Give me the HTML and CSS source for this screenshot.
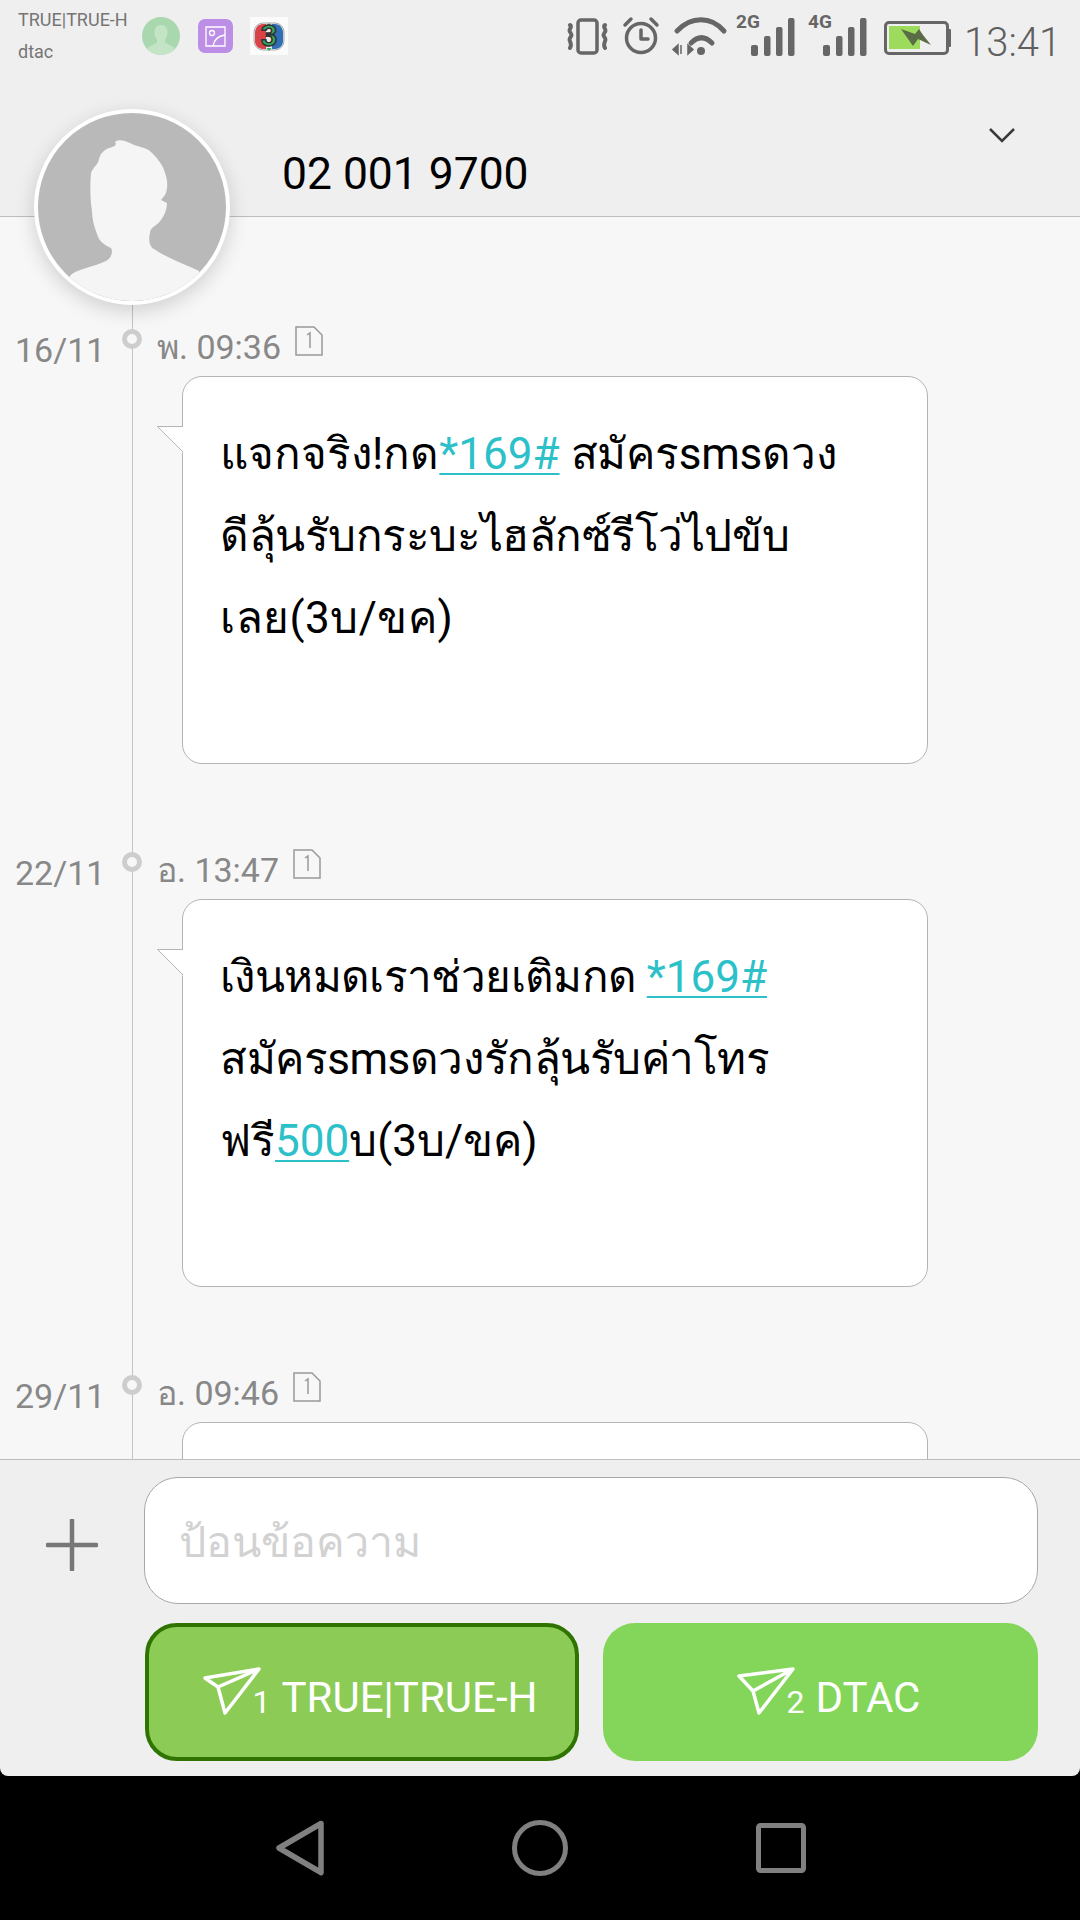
FILE: index.html
```html
<!DOCTYPE html>
<html lang="th">
<head>
<meta charset="utf-8">
<title>02 001 9700</title>
<link rel="stylesheet" href="styles.css">
</head>
<body>
<div class="phone">
  <div class="screen">
    <div class="status">
      <div class="carriers"><div>TRUE|TRUE-H</div><div>dtac</div></div>
      <svg class="apps" width="150" height="72" viewBox="142 0 150 72">
        <defs><clipPath id="gc"><circle cx="161" cy="36" r="19"/></clipPath></defs>
        <circle cx="161" cy="36" r="19" fill="#a9d8ae"/>
        <path clip-path="url(#gc)" d="M161 25c4 0 6.500 3 6.500 7 0 3-1 5.500-2.500 7.500v3l9 5v10h-26v-10l9-5v-3c-1.500-2-2.500-4.500-2.500-7.500 0-4 2.500-7 6.500-7z" fill="#c3e5c6"/>
        <rect x="198" y="19" width="35" height="34" rx="7" fill="#bd8ee6"/>
        <path d="M206 27h19v19h-19zM209.500 33a2.500 2.500 0 1 0 5 0a2.500 2.500 0 1 0-5 0M213 46c1-6 5-10 12-11" fill="none" stroke="#fff" stroke-width="1.300"/>
        <rect x="250" y="17" width="38" height="38" fill="#fbfbfb"/>
        <rect x="254" y="23" width="30" height="27" rx="9" fill="#ececec" stroke="#aaa"/>
        <path d="M263 24c-5 0-8 4-8 9v8c0 4 3 8 8 8h3V24z" fill="#d8434a"/>
        <path d="M275 24c5 0 8 4 8 9v8c0 4-3 8-8 8h-3V24z" fill="#2f6fb5"/>
        <path d="M269 23l2.500 3h-5z M269 51l2.500-3h-5z" fill="#35b06a"/>
        <text x="269" y="46" class="three">3</text>
      </svg>
      <svg class="sysicons" width="384" height="72" viewBox="567 0 384 72">
        <g fill="none" stroke="#666" stroke-width="3.500" stroke-linecap="round" stroke-linejoin="round">
          <rect x="578" y="20" width="19" height="33" rx="3"/>
          <path stroke-width="4" d="M570 25c3 2-2 4 0 7s2 3 0 6s3 5 0 10M605 25c-3 2 2 4 0 7s-2 3 0 6s-3 5 0 10"/>
          <circle cx="641" cy="38" r="14.500"/>
          <path d="M641 30v9h7M625 25l6-6M657 25l-6-6"/>
          <path d="M677 31c14-15 34-15 47 0M691 43c7-7 14-7 21 0" stroke-width="5"/>
        </g>
        <circle cx="701" cy="51" r="4" fill="#666"/>
        <path d="M678 45v9l-5-4.500zM681 45v9zM688 45l5 4.500l-5 4.500z" fill="#666" stroke="#666" stroke-width="1.500"/>
        <text x="736" y="28" class="net">2G</text>
        <text x="808" y="28" class="net">4G</text>
        <g fill="#666">
          <rect x="751" y="45" width="7" height="11" rx="2"/><rect x="764" y="36" width="6.500" height="20" rx="2"/><rect x="776" y="27" width="6.500" height="29" rx="2"/><rect x="788" y="18" width="6.500" height="38" rx="2"/>
          <rect x="823" y="45" width="7" height="11" rx="2"/><rect x="836" y="36" width="6.500" height="20" rx="2"/><rect x="848" y="27" width="6.500" height="29" rx="2"/><rect x="860" y="18" width="6.500" height="38" rx="2"/>
          <rect x="948" y="29" width="3" height="18" rx="1"/>
        </g>
        <rect x="885.500" y="22.500" width="62" height="31" rx="3.500" fill="none" stroke="#666" stroke-width="3"/>
        <rect x="889" y="26" width="31" height="23" fill="#9cdb5b"/>
        <path d="M901 29l14 5l4-5l4 6l8 10l-13-6l-5 7z" fill="#5b6b45"/>
      </svg>
      <div class="clock">13:41</div>
    </div>
    <header class="head">
      <div class="number">02 001 9700</div>
      <svg class="chevron" width="28" height="16" viewBox="0 0 28 16"><path d="M2 2l12 12L26 2" fill="none" stroke="#3a3a3a" stroke-width="2.500"/></svg>
    </header>
    <div class="avatar">
      <svg width="188" height="188" viewBox="4 4 188 188">
        <path fill="#f5f5f5" d="M81 33C84 30 90 31 96 34C103 38 112 38 117 43C124 50 129 56 131 64C134 72 134 80 131 86L127 91L133 94C133 102 129 108 127 111C123 117 116 118 116 124C114 132 116 138 120 140C133 149 150 155 165 162L170 200H30L36 167C42 160 60 158 72 152C78 149 79 142 77 139C70 136 65 132 63 125C60 117 58 110 58 102C56 90 56 75 57 64C59 58 64 56 65 50C66 45 70 41 75 39C78 38 84 37 81 33Z"/>
      </svg>
    </div>
    <main class="thread">
      <article class="msg">
        <div class="meta"><span class="date">16/11</span><span class="dot"></span><span class="time">พ. 09:36</span><svg class="sim" width="28" height="30" viewBox="0 0 28 30"><path d="M1 1h18l8 8v20H1z M12 9l3-2v15" fill="none" stroke="#999" stroke-width="1.500"/></svg></div>
        <div class="bubble">
          <svg class="tail" width="26" height="27" viewBox="0 0 26 27"><polygon points="0.500,0.500 26,0.500 26,27" fill="#fff"/><polyline points="26,0.500 0.500,0.500 26,26" fill="none" stroke="#b4b4b4"/></svg>
          แจกจริง!กด<a class="link">*169#</a> <span class="slim">สมัครsmsดวง</span><br><span class="tight">ดีลุ้นรับกระบะไฮลักซ์รีโว่ไปขับ</span><br><span class="wide">เลย(3บ/ขค)</span>
        </div>
      </article>
      <article class="msg">
        <div class="meta"><span class="date">22/11</span><span class="dot"></span><span class="time">อ. 13:47</span><svg class="sim" width="28" height="30" viewBox="0 0 28 30"><path d="M1 1h18l8 8v20H1z M12 9l3-2v15" fill="none" stroke="#999" stroke-width="1.500"/></svg></div>
        <div class="bubble">
          <svg class="tail" width="26" height="27" viewBox="0 0 26 27"><polygon points="0.500,0.500 26,0.500 26,27" fill="#fff"/><polyline points="26,0.500 0.500,0.500 26,26" fill="none" stroke="#b4b4b4"/></svg>
          <span class="tighter">เงินหมดเราช่วยเติมกด </span><a class="link">*169#</a><br><span class="tight">สมัครsmsดวงรักลุ้นรับค่าโทร</span><br>ฟรี<a class="link">500</a>บ(3บ/ขค)
        </div>
      </article>
      <article class="msg">
        <div class="meta"><span class="date">29/11</span><span class="dot"></span><span class="time">อ. 09:46</span><svg class="sim" width="28" height="30" viewBox="0 0 28 30"><path d="M1 1h18l8 8v20H1z M12 9l3-2v15" fill="none" stroke="#999" stroke-width="1.500"/></svg></div>
        <div class="bubble"></div>
      </article>
    </main>
    <footer class="composer">
      <div class="input-row">
        <svg class="plus" width="52" height="52" viewBox="0 0 52 52"><path d="M1.500 26h49M26 1.500v49" stroke="#777" stroke-width="4.500" stroke-linecap="round"/></svg>
        <div class="input">ป้อนข้อความ</div>
      </div>
      <div class="send-row">
        <button class="send send-active">
          <svg class="plane" width="58" height="48" viewBox="0 0 58 48"><path d="M2 11L56 2L22 46L15 20zM15 20L56 2" fill="none" stroke="#fff" stroke-width="3.500" stroke-linejoin="round"/></svg><span class="sim-no">1</span><span class="send-label">TRUE|TRUE-H</span>
        </button>
        <button class="send">
          <svg class="plane" width="58" height="48" viewBox="0 0 58 48"><path d="M2 9L56 2L22 46L16 24zM16 24L56 2" fill="none" stroke="#fff" stroke-width="3.500" stroke-linejoin="round"/></svg><span class="sim-no">2</span><span class="send-label">DTAC</span>
        </button>
      </div>
    </footer>
  </div>
  <nav class="nav">
    <svg width="48" height="56" viewBox="0 0 48 56"><path d="M45 3.500L3 28L45 52.500z" fill="none" stroke="#808080" stroke-width="5.500" stroke-linejoin="round"/></svg>
    <svg width="56" height="56" viewBox="0 0 56 56"><circle cx="28" cy="28" r="25.500" fill="none" stroke="#808080" stroke-width="5"/></svg>
    <svg width="50" height="50" viewBox="0 0 50 50"><rect x="2.500" y="2.500" width="45" height="45" rx="2" fill="none" stroke="#808080" stroke-width="5"/></svg>
  </nav>
</div>
</body>
</html>
```
FILE: styles.css
```css
* { box-sizing: border-box; }
html, body { margin: 0; padding: 0; }
body { font-family: Roboto, "Noto Sans", "Liberation Sans", sans-serif; background: #000; }
.phone { width: 1080px; height: 1920px; display: flex; flex-direction: column; background: #000; }
.screen { position: relative; height: 1776px; display: flex; flex-direction: column; background: #efefef; border-radius: 0 0 8px 8px; overflow: hidden; }

.status { height: 72px; display: flex; align-items: flex-start; padding-left: 18px; color: #666; flex: none; }
.carriers { width: 124px; font-size: 18px; line-height: 32px; padding-top: 4px; color: #757575; white-space: nowrap; }
.apps { flex: none; }
.three { font-family: Roboto, sans-serif; font-weight: 700; font-size: 29px; text-anchor: middle; fill: #35a860; stroke: #333; stroke-width: 1.600; }
.sysicons { flex: none; margin-left: 275px; }
.net { font-family: Roboto, sans-serif; font-weight: 700; font-size: 19px; fill: #666; }
.clock { margin-left: 13px; font-size: 40px; line-height: 44px; padding-top: 21px; color: #5f5f5f; font-weight: 300; }

.head { height: 145px; flex: none; display: flex; justify-content: space-between; padding-left: 282px; padding-right: 64px; border-bottom: 1px solid #bdbdbd; }
.number { font-size: 44.400px; line-height: 52px; padding-top: 76px; color: #000; white-space: nowrap; }
.chevron { margin-top: 55px; }

.avatar { position: absolute; left: 34px; top: 109px; width: 196px; height: 196px; border-radius: 50%; border: 4px solid #fff; background: #b9b9b9; overflow: hidden; box-shadow: 0 6px 20px rgba(0,0,0,.16); z-index: 3; }
.avatar svg { display: block; }

.thread { position: relative; flex: 1; min-height: 0; overflow: hidden; background: #f7f7f7; padding-top: 109px; border-bottom: 1px solid #bdbdbd; }
.thread::before { content: ""; position: absolute; left: 132px; top: 0; bottom: 0; width: 1px; background: #c4c4c4; }
.msg { position: relative; margin-bottom: 85px; }
.meta { height: 50px; display: flex; align-items: flex-start; padding-left: 15px; color: #888; }
.date { width: 107px; font-size: 34px; line-height: 38px; padding-top: 5px; height: 44px; }
.dot { width: 20px; height: 20px; margin-top: 3px; border-radius: 50%; border: 5px solid #cdcdcd; background: #f7f7f7; position: relative; }
.time { margin-left: 15px; font-size: 34px; line-height: 38px; padding-top: 2px; white-space: nowrap; }
.sim { margin-left: 14px; flex: none; }
.bubble { position: relative; margin-left: 182px; width: 746px; height: 388px; background: #fff; border: 1px solid #b4b4b4; border-radius: 20px; padding: 36px 0 0 37px; font-size: 44px; line-height: 82px; color: #000; white-space: nowrap; }
.tail { position: absolute; left: -26px; top: 49px; display: block; }
.link { color: #2cc0c9; text-decoration: underline; text-underline-offset: 4px; text-decoration-thickness: 2px; }
.slim { letter-spacing: -0.2px; }
.tight { letter-spacing: -0.45px; }
.tighter { letter-spacing: -0.62px; }
.wide { letter-spacing: 0.5px; }

.composer { height: 316px; flex: none; padding: 17px 42px 0 0; }
.input-row { display: flex; align-items: center; height: 127px; }
.plus { width: 52px; margin: 9px 46px 0; flex: none; }
.input { flex: 1; height: 127px; background: #fff; border: 1px solid #a8a8a8; border-radius: 34px; padding-left: 34px; font-size: 43px; line-height: 128px; color: #d2d2d2; }
.send-row { display: flex; gap: 24px; padding-left: 145px; margin-top: 19px; }
.send { flex: none; width: 435px; height: 138px; border: 0; border-radius: 32px; background: #83d65a; color: #fff; font-family: inherit; font-size: 42px; display: flex; align-items: center; justify-content: center; padding: 0 0 0 14px; }
.send-active { width: 434px; background: #8ccc56; border: 4px solid #2f7400; }
.plane { flex: none; margin-top: -2px; margin-left: 2px; margin-right: -8px; }
.sim-no { font-size: 32px; margin-top: 20px; margin-right: 11px; }
.send-label { margin-top: 11px; }

.nav { flex: 1; display: flex; align-items: center; padding-left: 276px; gap: 188px; }
```
